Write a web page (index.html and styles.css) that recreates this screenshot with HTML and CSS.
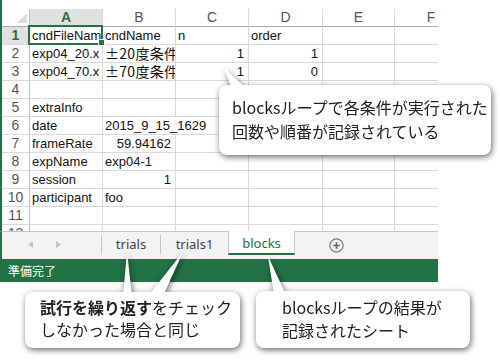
FILE: index.html
```html
<!DOCTYPE html>
<html lang="ja">
<head>
<meta charset="utf-8">
<link rel="stylesheet" href="styles.css">
</head>
<body>
<div class="excel">
  <div class="sheet">
    <div class="grid">
      <div class="corner"></div>
      <div class="ch sel">A</div><div class="ch">B</div><div class="ch">C</div><div class="ch">D</div><div class="ch">E</div><div class="ch">F</div>

      <div class="rh sel">1</div><div class="c a1">cndFileNam</div><div class="c">cndName</div><div class="c">n</div><div class="c">order</div><div class="c"></div><div class="c"></div>
      <div class="rh">2</div><div class="c">exp04_20.x</div><div class="c j">±20度条件</div><div class="c n">1</div><div class="c n">1</div><div class="c"></div><div class="c"></div>
      <div class="rh">3</div><div class="c">exp04_70.x</div><div class="c j">±70度条件</div><div class="c n">1</div><div class="c n">0</div><div class="c"></div><div class="c"></div>
      <div class="rh">4</div><div class="c"></div><div class="c"></div><div class="c"></div><div class="c"></div><div class="c"></div><div class="c"></div>
      <div class="rh">5</div><div class="c">extraInfo</div><div class="c"></div><div class="c"></div><div class="c"></div><div class="c"></div><div class="c"></div>
      <div class="rh">6</div><div class="c">date</div><div class="c span2">2015_9_15_1629</div><div class="c"></div><div class="c"></div><div class="c"></div>
      <div class="rh">7</div><div class="c">frameRate</div><div class="c n">59.94162</div><div class="c"></div><div class="c"></div><div class="c"></div><div class="c"></div>
      <div class="rh">8</div><div class="c">expName</div><div class="c">exp04-1</div><div class="c"></div><div class="c"></div><div class="c"></div><div class="c"></div>
      <div class="rh">9</div><div class="c">session</div><div class="c n">1</div><div class="c"></div><div class="c"></div><div class="c"></div><div class="c"></div>
      <div class="rh">10</div><div class="c">participant</div><div class="c">foo</div><div class="c"></div><div class="c"></div><div class="c"></div><div class="c"></div>
      <div class="rh">11</div><div class="c"></div><div class="c"></div><div class="c"></div><div class="c"></div><div class="c"></div><div class="c"></div>
      <div class="rh">12</div><div class="c"></div><div class="c"></div><div class="c"></div><div class="c"></div><div class="c"></div><div class="c"></div>
    </div>
  </div>
  <div class="tabbar">
    <div class="nav">
      <svg class="arrow" width="5" height="7" viewBox="0 0 5 7"><polygon points="5,0 5,7 0,3.5" fill="#c4c4c4"/></svg>
      <svg class="arrow" width="5" height="7" viewBox="0 0 5 7"><polygon points="0,0 0,7 5,3.5" fill="#c4c4c4"/></svg>
    </div>
    <div class="sep"></div>
    <div class="tab t1">trials</div>
    <div class="sep"></div>
    <div class="tab t2">trials1</div>
    <div class="tab active">blocks</div>
    <svg class="plus" width="15" height="15" viewBox="0 0 15 15"><circle cx="7.5" cy="7.5" r="6.6" fill="none" stroke="#7a7a7a" stroke-width="1.2"/><path d="M7.5 4.3v6.4M4.3 7.5h6.4" stroke="#666" stroke-width="1.6"/></svg>
  </div>
  <div class="status">準備完了</div>
</div>

<div class="callout c1">
  <svg class="tail" width="1" height="1"><polygon points="5,-17 13,4 28,4" fill="#fff"/></svg>
  <div class="bubble">blocksループで各条件が実行された<br>回数や順番が記録されている</div>
</div>

<div class="callout c2">
  <svg class="tail" width="1" height="1"><polygon points="102,-40 98,4 107,4" fill="#fff"/><polygon points="158,-40 123,4 138,4" fill="#fff"/></svg>
  <div class="bubble"><b>試行を繰り返す</b>をチェック<br>しなかった場合と同じ</div>
</div>

<div class="callout c3">
  <svg class="tail" width="1" height="1"><polygon points="12,-35 18,4 30,4" fill="#fff"/></svg>
  <div class="bubble">blocksループの結果が<br>記録されたシート</div>
</div>
</body>
</html>
```

FILE: styles.css
```css
body {
  margin: 0;
  width: 500px;
  height: 360px;
  position: relative;
  overflow: hidden;
  background: #fff;
  font-family: "Liberation Sans", "Noto Sans CJK JP", sans-serif;
}

.excel {
  width: 438px;
}

.sheet {
  height: 231px;
  overflow: hidden;
  border-left: 2px solid #217346;
  padding-top: 9px;
  box-sizing: border-box;
}

.grid {
  display: grid;
  grid-template-columns: 28px 73px 73px 73px 74px 72px 73px;
  grid-auto-rows: 18px;
  width: 466px;
}

.grid > div {
  box-sizing: border-box;
  border-right: 1px solid #d9d9d9;
  border-bottom: 1px solid #d9d9d9;
  white-space: nowrap;
  overflow: hidden;
}

.grid > .corner {
  position: relative;
  border-bottom-color: #ababab;
  border-right-color: #bdbdbd;
}

.corner::after {
  content: "";
  position: absolute;
  right: 2px;
  bottom: 3px;
  width: 0;
  height: 0;
  border-style: solid;
  border-width: 0 0 10px 10px;
  border-color: transparent transparent #dcdcdc transparent;
}

.grid > .ch {
  text-align: center;
  font-size: 14px;
  line-height: 17px;
  color: #555;
  border-bottom-color: #ababab;
}

.grid > .ch.sel {
  background: #e1e1e1;
  color: #217346;
  font-weight: bold;
  border-bottom: 2px solid #217346;
}

.grid > .rh {
  text-align: center;
  font-size: 14px;
  line-height: 17px;
  color: #555;
  border-right-color: #bdbdbd;
}

.grid > .rh.sel {
  background: #e1e1e1;
  color: #217346;
  font-weight: bold;
}

.c {
  font-size: 13px;
  line-height: 17px;
  color: #111;
  padding: 0 2px;
}

.c.n {
  text-align: right;
  padding-right: 4px;
}

.c.j {
  font-family: "Noto Sans CJK JP", sans-serif;
  font-size: 14px;
  letter-spacing: 0.3px;
}

.c.span2 {
  grid-column: span 2;
}

.grid > .a1 {
  position: relative;
  overflow: visible;
}

.a1::before {
  content: "";
  position: absolute;
  left: -2px;
  top: -2px;
  right: -1px;
  bottom: -1px;
  border: 2px solid #217346;
}

.a1::after {
  content: "";
  position: absolute;
  right: -3px;
  bottom: -2px;
  width: 5px;
  height: 5px;
  background: #217346;
  border: 1px solid #fff;
}

.tabbar {
  height: 28px;
  box-sizing: border-box;
  border-top: 1px solid #c6c6c6;
  border-left: 2px solid #217346;
  background: #f3f3f3;
  display: flex;
  align-items: flex-start;
}

.nav {
  width: 99px;
  height: 24px;
  display: flex;
  align-items: center;
  padding-left: 26px;
  gap: 23px;
  box-sizing: border-box;
}

.arrow {
  display: block;
}

.sep {
  width: 1px;
  height: 20px;
  margin-top: 3px;
  background: #c6c6c6;
}

.tab {
  height: 24px;
  line-height: 25px;
  text-align: center;
  font-family: "Noto Sans", "Liberation Sans", sans-serif;
  font-size: 13px;
  color: #444;
}

.t1 {
  width: 58px;
}

.t2 {
  width: 67px;
}

.tab.active {
  width: 65px;
  height: 22px;
  line-height: 25px;
  margin-top: -1px;
  background: #fff;
  color: #217346;
  border-left: 1px solid #c6c6c6;
  border-right: 1px solid #c6c6c6;
  border-bottom: 2px solid #217346;
}

.plus {
  display: block;
  margin-left: 34px;
  margin-top: 6px;
}

.status {
  height: 23px;
  background: #217346;
  color: #fff;
  font-family: "Noto Sans CJK JP", sans-serif;
  font-size: 12px;
  line-height: 23px;
  padding-left: 8px;
}

.callout {
  position: absolute;
  filter: drop-shadow(1px 2px 3px rgba(0, 0, 0, 0.6));
}

.tail {
  position: absolute;
  left: 0;
  top: 0;
  overflow: visible;
}

.bubble {
  position: relative;
  height: 100%;
  box-sizing: border-box;
  background: #fff;
  border-radius: 8px;
  font-family: "Noto Sans CJK JP", sans-serif;
  font-size: 16px;
  color: #222;
  white-space: nowrap;
}

.c1 {
  left: 219px;
  top: 85px;
  width: 272px;
  height: 70px;
}

.c1 .bubble {
  padding: 10px 0 0 13px;
  line-height: 24px;
}

.c2 {
  left: 25px;
  top: 292px;
  width: 215px;
  height: 56px;
}

.c2 .bubble {
  padding: 4px 0 0 15px;
  line-height: 22px;
}

.c3 {
  left: 256px;
  top: 291px;
  width: 214px;
  height: 57px;
}

.c3 .bubble {
  padding: 5px 0 0 26px;
  line-height: 23px;
}
```
